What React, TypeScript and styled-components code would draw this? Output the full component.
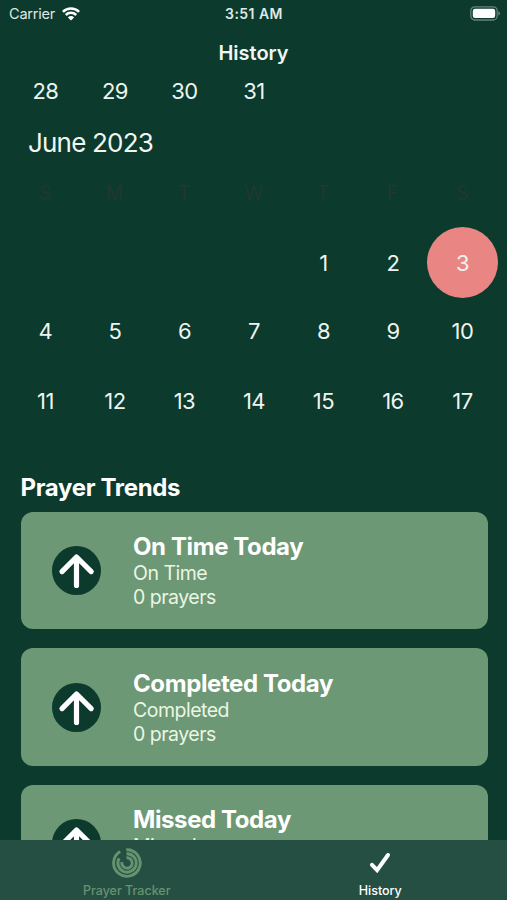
import React from "react";
import styled, { createGlobalStyle } from "styled-components";

const GlobalStyle = createGlobalStyle`
  * { box-sizing: border-box; }
  body { margin: 0; background: #0c3a2d; }
`;

const Screen = styled.div`
  width: 507px;
  height: 900px;
  display: flex;
  flex-direction: column;
  overflow: hidden;
  background: #0c3a2d;
  color: #fff;
  font-family: Inter, "Liberation Sans", sans-serif;
  white-space: nowrap;
`;

const StatusBar = styled.div`
  flex: none;
  height: 27px;
  display: grid;
  grid-template-columns: 1fr auto 1fr;
  align-items: center;
  padding: 0 6px 0 9px;
  color: #dfe9e4;
`;

const Carrier = styled.div`
  display: flex;
  align-items: center;
  gap: 7px;
  font-size: 14.5px;
  letter-spacing: -0.2px;
`;

const Clock = styled.div`
  font-size: 14px;
  font-weight: 600;
  letter-spacing: 0.45px;
  padding-right: 2px;
`;

const BatterySlot = styled.div`
  display: flex;
  justify-content: flex-end;
`;

const NavBar = styled.h1`
  flex: none;
  margin: 0;
  height: 49px;
  text-align: center;
  font-size: 20px;
  line-height: 52px;
  font-weight: 600;
  letter-spacing: 0;
  color: #f1f6f3;
`;

const Content = styled.main`
  flex: 1;
  min-height: 0;
  overflow: hidden;
`;

const Week = styled.div<{ $height?: number; $gapAbove?: number }>`
  display: grid;
  grid-template-columns: repeat(7, 69.5px);
  justify-content: center;
  align-items: center;
  height: ${(p) => p.$height ?? 69.5}px;
  margin-top: ${(p) => p.$gapAbove ?? 0}px;
`;

const Day = styled.div<{ $selected?: boolean }>`
  justify-self: center;
  width: 71px;
  height: ${(p) => (p.$selected ? "71px" : "30px")};
  margin: 0 -1px;
  padding-left: 0.8px;
  display: flex;
  align-items: center;
  justify-content: center;
  border-radius: 50%;
  background: ${(p) => (p.$selected ? "#e98582" : "transparent")};
  color: #edf4f0;
  font-size: 22px;
  letter-spacing: -0.6px;
`;

const Weekday = styled.div`
  text-align: center;
  font-size: 19.5px;
  color: #20382f;
`;

const MonthTitle = styled.h2`
  margin: 0;
  padding-left: 28px;
  height: 72px;
  line-height: 74px;
  font-size: 26px;
  font-weight: 400;
  letter-spacing: -0.8px;
  color: #f1f6f3;
`;

const Trends = styled.section`
  padding: 0 19.5px 0 20.5px;
  margin-top: 34.5px;
`;

const SectionTitle = styled.h2`
  margin: 0;
  height: 41.5px;
  line-height: 35px;
  font-size: 24px;
  font-weight: 700;
  letter-spacing: -0.33px;
`;

const Card = styled.article`
  display: flex;
  align-items: center;
  height: 117.5px;
  margin-bottom: 19.3px;
  padding-left: 31.5px;
  border-radius: 12px;
  background: #6d9875;
`;

const CardText = styled.div`
  margin-left: 32px;
  padding-top: 1px;
`;

const CardTitle = styled.h3`
  margin: 0;
  font-size: 24px;
  line-height: 29px;
  font-weight: 700;
  letter-spacing: -0.4px;
`;

const CardLine = styled.p`
  margin: 0;
  font-size: 19.5px;
  line-height: 24.4px;
  letter-spacing: -0.5px;
  color: #eaf6e4;
`;

const TabBar = styled.nav`
  flex: none;
  height: 60px;
  display: grid;
  grid-template-columns: 1fr 1fr;
  background: #264f43;
`;

const Tab = styled.div<{ $active?: boolean }>`
  display: flex;
  flex-direction: column;
  align-items: center;
  padding-top: 8px;
  gap: 4px;
  color: ${(p) => (p.$active ? "#ffffff" : "#66936f")};
`;

const TabLabel = styled.span`
  font-size: 12.5px;
  line-height: 18px;
  font-weight: 500;
  letter-spacing: 0;
`;

const WifiIcon = () => (
  <svg width="18" height="14" viewBox="0 0 18 14" fill="none" stroke="#fff" strokeWidth="2.5">
    <path d="M.9 4.9a11.5 11.5 0 0 1 16.2 0" />
    <path d="M3.8 8a7.4 7.4 0 0 1 10.4 0" />
    <path d="M9 13.6 5.9 10.4a4.4 4.4 0 0 1 6.2 0Z" fill="#fff" stroke="none" />
  </svg>
);

const BatteryIcon = () => (
  <svg width="31" height="15" viewBox="0 0 31 15">
    <rect x=".8" y=".8" width="26.4" height="13.2" rx="4" fill="none" stroke="#668379" strokeWidth="1.3" />
    <rect x="2.8" y="2.8" width="22.4" height="9.2" rx="2.3" fill="#fff" />
    <path d="M28.4 5.2c2.2.8 2.2 3.6 0 4.4Z" fill="#668379" />
  </svg>
);

const ArrowUpIcon = () => (
  <svg width="49" height="49" viewBox="0 0 49 49">
    <circle cx="24.5" cy="24.5" r="24.5" fill="#0c3a2d" />
    <path
      d="M24.5 39.4V11M10 25.6 24.5 11 39.2 25.6"
      fill="none"
      stroke="#fff"
      strokeWidth="5.2"
      strokeLinecap="round"
      strokeLinejoin="round"
    />
  </svg>
);

const RingsIcon = () => (
  <svg width="30" height="30" viewBox="0 0 30 30" fill="none" stroke="currentColor" strokeWidth="2.9">
    <path d="M14.2 1.7A13.3 13.3 0 1 1 8.2 3.5" />
    <path d="M14.5 5.8A9.2 9.2 0 1 1 7.2 10.2" />
    <path d="M14.5 9.8A5.2 5.2 0 1 1 9.9 14" />
  </svg>
);

const CheckIcon = () => (
  <svg
    width="30"
    height="30"
    viewBox="0 0 30 30"
    fill="none"
    stroke="currentColor"
    strokeWidth="4"
    strokeLinecap="round"
  >
    <path d="M7 16.8 12.1 22.2 23 7" />
  </svg>
);

const weekdays = ["S", "M", "T", "W", "T", "F", "S"];
const weeks: (number | null)[][] = [
  [null, null, null, null, 1, 2, 3],
  [4, 5, 6, 7, 8, 9, 10],
  [11, 12, 13, 14, 15, 16, 17],
];
const trends = [
  { title: "On Time Today", label: "On Time" },
  { title: "Completed Today", label: "Completed" },
  { title: "Missed Today", label: "Missed" },
];

export default function App() {
  return (
    <Screen>
      <GlobalStyle />
      <StatusBar>
        <Carrier>
          Carrier <WifiIcon />
        </Carrier>
        <Clock>3:51 AM</Clock>
        <BatterySlot>
          <BatteryIcon />
        </BatterySlot>
      </StatusBar>
      <NavBar>History</NavBar>
      <Content>
        <Week $height={30}>
          {[28, 29, 30, 31].map((d) => (
            <Day key={d}>{d}</Day>
          ))}
        </Week>
        <MonthTitle>June 2023</MonthTitle>
        <Week $height={30}>
          {weekdays.map((d, i) => (
            <Weekday key={i}>{d}</Weekday>
          ))}
        </Week>
        {weeks.map((week, i) => (
          <Week key={i} $gapAbove={i === 0 ? 19 : 0}>
            {week.map((d, col) => (
              <Day key={col} $selected={d === 3}>
                {d}
              </Day>
            ))}
          </Week>
        ))}
        <Trends>
          <SectionTitle>Prayer Trends</SectionTitle>
          {trends.map((t) => (
            <Card key={t.title}>
              <ArrowUpIcon />
              <CardText>
                <CardTitle>{t.title}</CardTitle>
                <CardLine>{t.label}</CardLine>
                <CardLine>0 prayers</CardLine>
              </CardText>
            </Card>
          ))}
        </Trends>
      </Content>
      <TabBar>
        <Tab>
          <RingsIcon />
          <TabLabel>Prayer Tracker</TabLabel>
        </Tab>
        <Tab $active>
          <CheckIcon />
          <TabLabel>History</TabLabel>
        </Tab>
      </TabBar>
    </Screen>
  );
}
